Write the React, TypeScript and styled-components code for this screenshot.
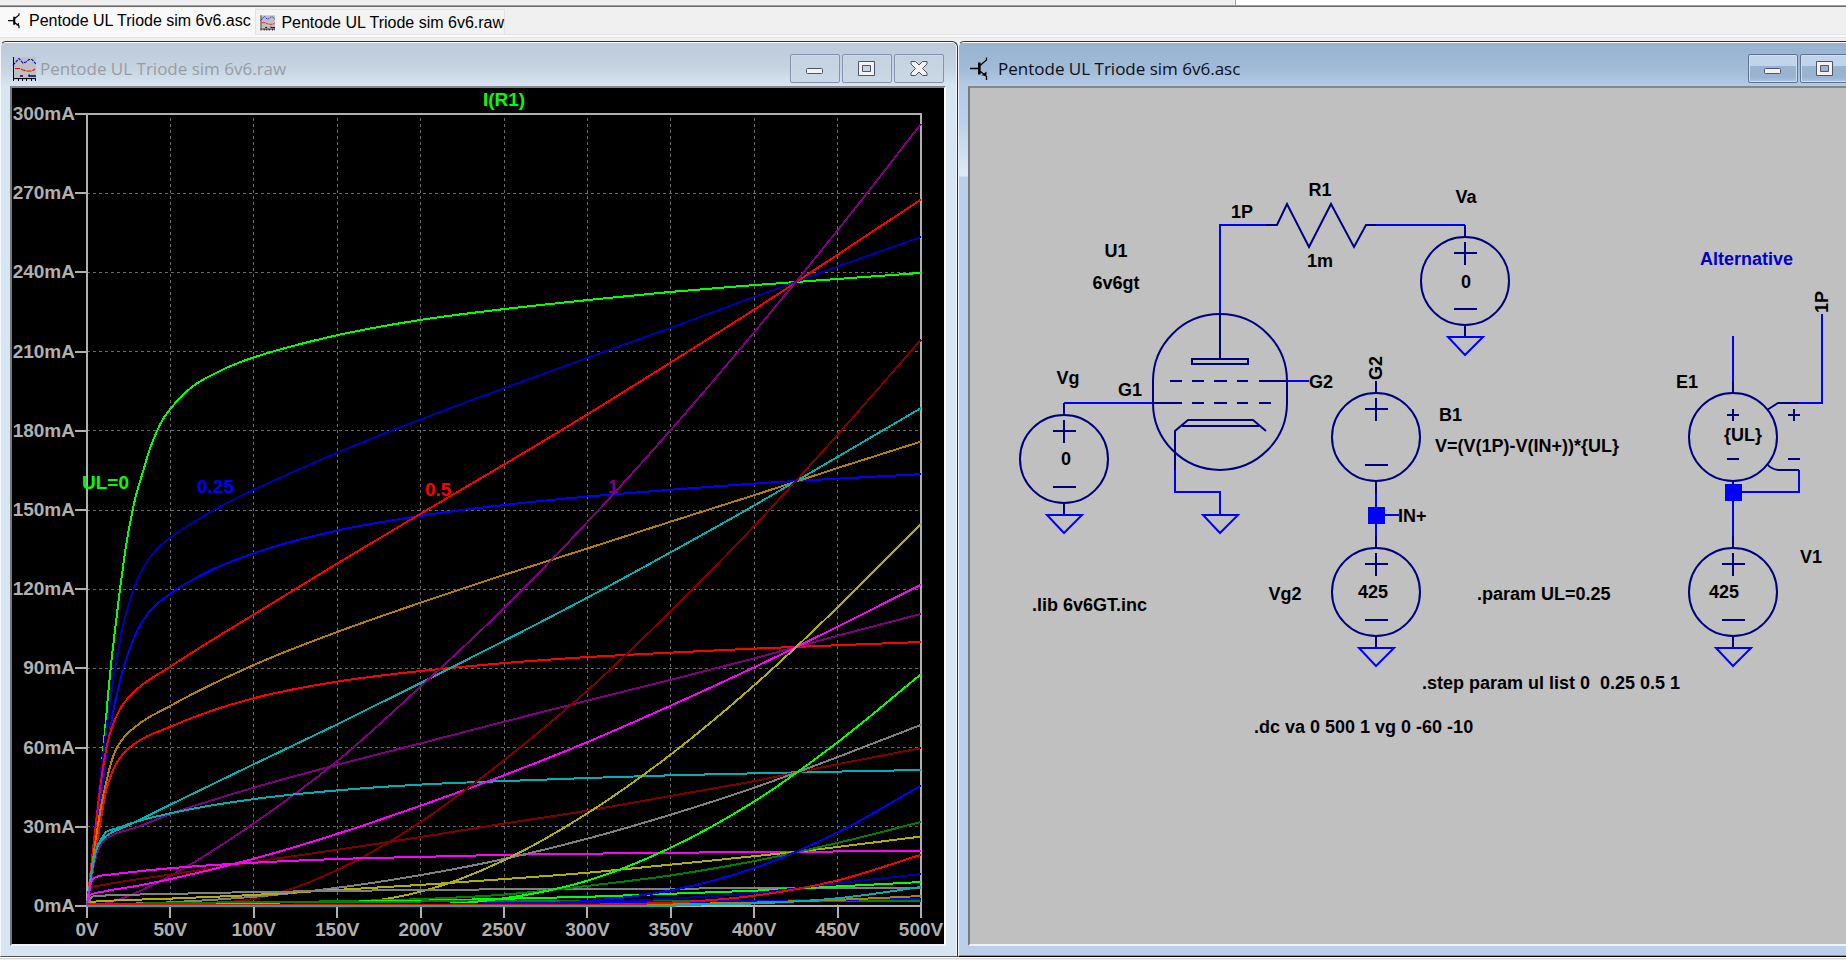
import React from "react";
import styled, { createGlobalStyle, css } from "styled-components";

const GlobalStyle = createGlobalStyle`
  *, *::before, *::after { box-sizing: border-box; }
  body {
    margin: 0;
    background: #ffffff;
    font-family: "Liberation Sans", Arial, sans-serif;
    overflow-x: hidden;
  }
`;

/* ---------- application frame ---------- */

const Page = styled.div`
  display: flex;
  flex-direction: column;
  min-height: 100vh;
  background: #f0f0f0;
`;

const ToolStrip = styled.div`
  display: grid;
  grid-template-columns: 1235fr 611fr;
  height: 7px;
  border-bottom: 1px solid #696969;
  box-shadow: inset 0 -1px 0 #a0a0a0;
`;

const ToolStripRest = styled.div`
  height: 5px;
  background: #ffffff;
  border-left: 1px solid #a0a0a0;
`;

const TabBar = styled.div`
  display: flex;
  align-items: flex-start;
  height: 31px;
  padding-top: 1px;
  background: linear-gradient(#f0f0f0 27px, #e3e3e3 27px, #e3e3e3 28px, #fbfbfb 28px, #fbfbfb 30px, #e3e3e3 30px);
`;

const Tab = styled.button<{ $active?: boolean }>`
  display: flex;
  align-items: center;
  font: 16px/20px "Liberation Sans", Arial, sans-serif;
  color: #000000;
  white-space: nowrap;
  border: 0;
  ${(p) =>
    p.$active
      ? css`
          width: 255px;
          height: 29px;
          padding: 0 0 4px 6px;
          gap: 7px;
          background: #f9f9f9;
        `
      : css`
          width: 250px;
          height: 26px;
          margin-top: 1px;
          padding: 2px 0 0 4px;
          gap: 6px;
          background: #f3f3f3;
          border: 1px solid #e3e3e3;
        `}
`;

const Workspace = styled.main`
  display: grid;
  grid-template-columns: minmax(0, 958fr) minmax(0, 888fr);
  align-items: start;
  padding-top: 3px;
  background: #f0f0f0;
  border-bottom: 1px solid #ffffff;
`;

const Footer = styled.div`
  flex: 1;
  border-top: 1px solid #d4d4d4;
  background: #f0f0f0;
`;

/* ---------- child windows ---------- */

const WindowFrame = styled.section<{ $active?: boolean }>`
  display: flex;
  flex-direction: column;
  border-top: 1px solid #2b2f36;
  border-radius: 6px 6px 0 0;
  overflow: hidden;
  ${(p) =>
    p.$active
      ? css`
          padding: 0 0 10px 9px;
          border-left: 1px solid #eef4fb;
          border-bottom: 1px solid #000000;
          border-top-right-radius: 0;
          background: linear-gradient(
            #ffffff 1px, #98b3d1 1px, #a0bad7 26px, #b4cbe6 44px, #b9d1ea 80px,
            #dfe9f5 134px, #bad0ea 135px
          );
          box-shadow: inset 0 -1px 0 #35b5d3;
        `
      : css`
          padding: 0 11px 10px 9px;
          border-left: 1px solid #f3f7fb;
          border-right: 1px solid #2b2f36;
          border-bottom: 1px solid #4b4f55;
          background: linear-gradient(#ffffff 1px, #bccad9 1px, #c6d3e1 26px, #d7e4f2 44px);
          box-shadow: inset -1px 0 0 #f3f7fb;
        `}
`;

const TitleBar = styled.header<{ $active?: boolean }>`
  display: flex;
  align-items: center;
  height: 44px;
  padding: 9px 2px 0 2px;
  overflow: hidden;
  color: ${(p) => (p.$active ? "#0b0f18" : "#989da4")};
`;

const Title = styled.h2<{ $gap: number }>`
  flex: 1;
  min-width: 0;
  margin: 0;
  padding-left: ${(p) => p.$gap}px;
  font: 400 17px/24px "Open Sans", "Noto Sans", sans-serif;
  white-space: nowrap;
  overflow: hidden;
`;

const Controls = styled.div<{ $cut?: boolean }>`
  display: flex;
  gap: 2px;
  flex: none;
  margin-right: ${(p) => (p.$cut ? "-6px" : "0")};
`;

const ControlButton = styled.button<{ $active?: boolean }>`
  display: flex;
  align-items: center;
  justify-content: center;
  width: 50px;
  height: 29px;
  padding: 0;
  border-radius: 2px;
  ${(p) =>
    p.$active
      ? css`
          border: 1px solid #5f7391;
          background: linear-gradient(#c0d5ea 0 11px, #99b3d0 11px 22px, #adc6e2);
          box-shadow: inset 0 0 0 1px #cfe0f2;
        `
      : css`
          border: 1px solid #8492b0;
          background: linear-gradient(#c4d1df, #cbd8e6);
          box-shadow: inset 0 0 0 1px #cdd9e7;
        `}
`;

const Client = styled.div<{ $dark?: boolean; $bleed?: boolean }>`
  border: 2px solid;
  border-color: #84878a #ffffff #f2f2f2 #77797c;
  border-right-width: ${(p) => (p.$bleed ? 0 : 2)}px;
  background: ${(p) => (p.$dark ? "#000000" : "#c0c0c0")};
`;

const Canvas = styled.svg`
  display: block;
  width: 100%;
  height: auto;
  font-family: "Liberation Sans", Arial, sans-serif;
  font-weight: 700;
`;

const PlotText = styled.text`
  font-size: 19px;
`;

const NoteText = styled.text`
  font-size: 18px;
  white-space: pre;
`;

/* ---------- icons ---------- */

const TransistorIcon = ({ width, height }: { width: number; height: number }) => (
  <svg width={width} height={height} viewBox="0 0 18 24" aria-hidden="true"
    fill="none" stroke="#000" strokeWidth={height > 20 ? 1.3 : 1.8}>
    <path d="M0 11.5H9M10 5.5V17.5M8.7 5.5V17.5M10 8.5L16.5 3V0.5M10 14L16.5 19.5V23" />
    <path d="M11.5 18.5H16.5V14.5Z" fill="#000" stroke="none" />
  </svg>
);

const WaveIcon = ({ size }: { size: number }) => (
  <svg width={size} height={size} viewBox="0 0 24 24" aria-hidden="true" fill="none">
    <rect x="1" width="23" height="23" fill="#c0c0c0" />
    <path d="M1 8L3 6L7 1.5L11 6L14 5L17 2.5H20L24 7" stroke="#0000ff" strokeWidth="1.1" strokeDasharray="3 1" />
    <path d="M3 11.5H8L11 13L15 14H20L23 12" stroke="#ff0000" strokeWidth="1.2" strokeDasharray="5 1" />
    <path d="M8 19H11M17 17.5V19H24" stroke="#000080" strokeWidth="1.4" />
    <path d="M1.5 0V24M1 21.5H24M6.5 21V24M10.5 21V24M14.5 21V24M19.5 21V24M23.5 21V24" stroke="#000" strokeWidth="1" />
  </svg>
);

const glyph = { fill: "#f3f3f3", stroke: "#4d5468" };

const MinimizeGlyph = () => (
  <svg width="18" height="16" viewBox="0 0 18 16" aria-hidden="true" {...glyph}>
    <rect x="0.5" y="7.5" width="16" height="5" rx="1" />
  </svg>
);

const MaximizeGlyph = () => (
  <svg width="18" height="16" viewBox="0 0 18 16" aria-hidden="true" {...glyph}>
    <path fillRule="evenodd" d="M0.5 0.5H16.5V14.5H0.5ZM4.5 4.5V10.5H12.5V4.5Z" />
  </svg>
);

const CloseGlyph = () => (
  <svg width="18" height="16" viewBox="0 0 18 16" aria-hidden="true" {...glyph} strokeLinejoin="round">
    <path d="M1 0.5H5.5L9 4L12.5 0.5H17V3L12.5 7.5L17 12V14.5H12.5L9 11L5.5 14.5H1V12L5.5 7.5L1 3Z" />
  </svg>
);

/* ---------- plot ---------- */

type Point = [number, number];
type Trace = { color: string; points: Point[] };

const LIME = "#00ff00";
const BLUE = "#0000ff";
const RED = "#ff0000";
const TEAL = "#00b0b0";
const MAGENTA = "#ff00ff";
const GREY = "#808080";
const GREEN = "#008000";
const NAVY = "#0000b0";
const GOLD = "#b08000";
const PURPLE = "#800080";
const MAROON = "#800000";
const OLIVE = "#b0b000";

/* Points are [anode volts, milliamps]. */
const traces: Trace[] = [
  { color: LIME, points: [[0, 0], [9.4, 57], [11.8, 74], [14, 89], [16.8, 104.5], [19.8, 120], [22.8, 134], [28.8, 154], [33.8, 165], [37.8, 173.4], [41.8, 179.7], [45.8, 184.7], [50, 188.3], [56.8, 193.2], [63.7, 197], [75.7, 201.4], [91.7, 206], [100, 207.8], [150, 216.2], [200, 222], [250, 226.1], [300, 229.5], [350, 232.6], [400, 235.2], [500, 239.8]] },
  { color: NAVY, points: [[0, 0], [9.8, 58], [12.8, 73], [16.8, 90], [19.4, 99.5], [22.2, 107.8], [25.8, 115.6], [29.8, 122.9], [34.8, 129.2], [40.8, 134.4], [50, 139.5], [66.5, 146.4], [88.7, 154.2], [100, 157.6], [150, 171.7], [200, 184.3], [250, 196.1], [300, 207.6], [350, 219], [400, 230.7], [450, 242.2], [500, 253.4]] },
  { color: BLUE, points: [[0, 0], [9.8, 49], [12.8, 63], [15.8, 74], [18.8, 82.5], [21.4, 89.2], [25.4, 97], [29.8, 103.9], [35.8, 110.2], [42.8, 114.8], [50, 118.3], [75, 127.4], [100, 133.6], [150, 142.2], [200, 147.8], [250, 151.9], [300, 155.1], [350, 157.7], [400, 160], [500, 163.6]] },
  { color: RED, points: [[0, 0], [5.8, 33.8], [8.8, 49], [11.4, 59], [13.8, 65.4], [16.8, 70.8], [19.8, 74.6], [23.8, 78.2], [29.8, 82], [50, 90.7], [100, 110.4], [150, 129.7], [200, 148.6], [250, 167.2], [300, 186.2], [350, 205.9], [400, 225.9], [450, 246.7], [500, 267.6]] },
  { color: GOLD, points: [[0, 0], [5.8, 27.5], [8.8, 38.9], [11.4, 46.5], [13.8, 52.8], [16.8, 58.5], [21.8, 63.6], [29.8, 68.3], [50, 75.8], [100, 91.3], [150, 103.8], [200, 114.9], [250, 125.4], [300, 135.4], [350, 145.6], [400, 155.6], [450, 165.9], [500, 175.9]] },
  { color: RED, points: [[0, 0], [5.8, 23], [8.8, 34.5], [11.4, 43.5], [14.4, 49.6], [17.8, 54.2], [23.8, 59], [29.8, 62], [50, 67.9], [75, 74], [100, 78.7], [150, 85], [200, 89], [250, 92], [300, 94.3], [350, 96], [400, 97.5], [500, 100]] },
  { color: TEAL, points: [[0, 0], [1.8, 8.6], [4.8, 18.7], [7.8, 23.6], [11.8, 26.6], [20, 29.2], [30, 32.2], [50, 38.4], [100, 53.7], [150, 68.8], [200, 84.5], [250, 100.4], [300, 116.8], [350, 134], [400, 151.7], [450, 170.1], [500, 188.6]] },
  { color: PURPLE, points: [[0, 0], [10, 0.8], [18, 2.2], [30, 5.2], [50, 11.4], [100, 31.3], [150, 54.9], [200, 83.1], [250, 112.8], [300, 145.4], [350, 180.3], [400, 217.3], [425, 236.4], [450, 255.9], [500, 296.2]] },
  { color: PURPLE, points: [[0, 0], [2.2, 8.6], [4.8, 17.4], [7.8, 22.5], [11.8, 25.6], [29.8, 29.8], [50, 34.8], [100, 44.8], [150, 53.5], [200, 61.6], [250, 69.8], [300, 77.8], [350, 85.7], [400, 93.8], [450, 102.4], [500, 110.6]] },
  { color: TEAL, points: [[0, 0], [1.8, 8.6], [3.8, 16], [5.8, 21.8], [8.8, 25.6], [11.8, 28.2], [16.8, 29.2], [27.8, 31.6], [50, 35.1], [100, 40.5], [150, 43.8], [200, 46], [250, 47.3], [300, 48.5], [350, 49.5], [425, 50.6], [500, 51.5]] },
  { color: MAROON, points: [[0, 0], [2.2, 7], [10, 8], [50, 11.9], [100, 16.7], [150, 21.3], [200, 26.1], [250, 31.2], [300, 36.1], [350, 41.7], [400, 47.3], [450, 53.7], [500, 59.8]] },
  { color: MAGENTA, points: [[0, 0], [1.8, 4.2], [10, 5.5], [30, 7.6], [50, 10.2], [100, 17.9], [150, 27.3], [200, 38], [250, 49.5], [300, 62.1], [350, 75.9], [400, 90.4], [450, 105.8], [500, 121.7]] },
  { color: MAROON, points: [[0, 0.2], [60, 0.5], [75, 1], [100, 2.7], [120, 6], [150, 13.6], [200, 31.8], [250, 55.2], [300, 81.6], [350, 111.7], [400, 143.9], [450, 178.5], [500, 214.5]] },
  { color: MAGENTA, points: [[0, 0], [2.8, 9.4], [5.8, 11.1], [16.8, 12.1], [50, 14.3], [100, 16.4], [150, 17.8], [200, 18.6], [250, 19.4], [350, 20.2], [425, 20.5], [500, 21]] },
  { color: GREY, points: [[0, 0.4], [10, 0.6], [50, 1.4], [100, 3.5], [150, 6.9], [200, 11.7], [250, 17.8], [300, 25.5], [350, 34.6], [400, 44.8], [450, 56.4], [500, 68.6]] },
  { color: OLIVE, points: [[0, 0], [3, 1.6], [50, 2.8], [100, 4.2], [150, 6.1], [200, 8], [250, 10.2], [300, 12.6], [350, 15.7], [425, 20.5], [500, 26.3]] },
  { color: OLIVE, points: [[0, 0.2], [130, 0.2], [150, 0.6], [170, 1.8], [200, 5.4], [223.6, 10.2], [250, 17.3], [300, 35.1], [350, 57.4], [400, 83.6], [450, 113.1], [500, 144.7]] },
  { color: GREY, points: [[0, 0], [3, 3.4], [5, 3.8], [50, 4.6], [100, 5.3], [200, 6.1], [300, 6.5], [500, 6.8]] },
  { color: GREEN, points: [[0, 0.4], [100, 1.3], [150, 1.8], [200, 2.6], [250, 4.3], [300, 7.6], [350, 11.6], [400, 17], [450, 23.9], [500, 31.8]] },
  { color: LIME, points: [[0, 0.4], [100, 1.2], [200, 2], [300, 3.5], [400, 5.8], [500, 9.1]] },
  { color: GREEN, points: [[0, 0.6], [100, 1.5], [200, 1.7], [500, 2]] },
  { color: LIME, points: [[0, 0.2], [180, 0.3], [223.6, 1.1], [250, 2.9], [270, 5], [300, 9.6], [350, 22.1], [400, 39.6], [450, 62], [500, 87.8]] },
  { color: BLUE, points: [[0, 0.2], [200, 0.8], [300, 1.2], [400, 1.9], [500, 2.8]] },
  { color: NAVY, points: [[0, 0.2], [250, 0.8], [300, 1.5], [350, 2.8], [400, 4.9], [450, 8.6], [500, 12.1]] },
  { color: BLUE, points: [[0, 0.2], [200, 0.3], [250, 0.7], [300, 1.9], [350, 5.9], [400, 14.3], [425, 20.5], [450, 27.8], [500, 45.6]] },
  { color: GOLD, points: [[0, 0.2], [300, 0.5], [400, 1.3], [450, 2.3], [500, 3.8]] },
  { color: RED, points: [[0, 0.2], [250, 0.3], [300, 0.5], [350, 1.3], [400, 3.9], [450, 9.7], [500, 19.4]] },
  { color: TEAL, points: [[0, 0], [345, 0], [360, 0.4], [400, 1], [450, 2.9], [500, 7.2]] },
];

const PLOT = { left: 87, right: 921, top: 114, bottom: 906 };
const xOf = (v: number) => PLOT.left + (v * (PLOT.right - PLOT.left)) / 500;
const yOf = (ma: number) => PLOT.bottom - (ma * (PLOT.bottom - PLOT.top)) / 300;

/* Monotone cubic through the samples, so that no trace overshoots. */
function tracePath(points: Point[]): string {
  const p = points.map(([v, i]) => [xOf(v), yOf(i)] as Point);
  const n = p.length;
  const slope = (k: number) => (p[k + 1][1] - p[k][1]) / (p[k + 1][0] - p[k][0]);
  const tangent = (k: number) => {
    if (k === 0) return slope(0);
    if (k === n - 1) return slope(n - 2);
    const a = slope(k - 1);
    const b = slope(k);
    if (a * b <= 0) return 0;
    const ha = p[k][0] - p[k - 1][0];
    const hb = p[k + 1][0] - p[k][0];
    const mid = (a * hb + b * ha) / (ha + hb);
    return Math.sign(mid) * Math.min(Math.abs(mid), 2 * Math.abs(a), 2 * Math.abs(b));
  };
  let d = `M${p[0][0]} ${p[0][1]}`;
  for (let k = 0; k < n - 1; k++) {
    const h = (p[k + 1][0] - p[k][0]) / 3;
    d += `C${(p[k][0] + h).toFixed(1)} ${(p[k][1] + h * tangent(k)).toFixed(1)} ${(p[k + 1][0] - h).toFixed(1)} ${(p[k + 1][1] - h * tangent(k + 1)).toFixed(1)} ${p[k + 1][0].toFixed(1)} ${p[k + 1][1].toFixed(1)}`;
  }
  return d;
}

const steps = Array.from({ length: 11 }, (_, k) => k);

const Plot = () => (
  <Canvas viewBox="12 88 932 856" role="img" aria-label="I(R1) against anode voltage">
    <g stroke="#6a6a6a" strokeDasharray="3 3" shapeRendering="crispEdges">
      {steps.slice(1, 10).map((k) => (
        <React.Fragment key={k}>
          <line x1={Math.floor(xOf(k * 50)) + 0.5} x2={Math.floor(xOf(k * 50)) + 0.5} y1={118} y2={PLOT.bottom} />
          <line x1={PLOT.left} x2={PLOT.right} y1={Math.floor(yOf(k * 30)) + 0.5} y2={Math.floor(yOf(k * 30)) + 0.5} />
        </React.Fragment>
      ))}
    </g>
    <g stroke="#b0b0b0" strokeWidth={2} fill="none" shapeRendering="crispEdges">
      <rect x={PLOT.left} y={PLOT.top} width={PLOT.right - PLOT.left} height={PLOT.bottom - PLOT.top} />
      {steps.map((k) => (
        <React.Fragment key={k}>
          <line x1={75} x2={PLOT.left} y1={Math.round(yOf(k * 30))} y2={Math.round(yOf(k * 30))} />
          <line x1={Math.round(xOf(k * 50))} x2={Math.round(xOf(k * 50))} y1={PLOT.bottom} y2={918} />
        </React.Fragment>
      ))}
    </g>
    <g fill="none" strokeWidth={2} shapeRendering="crispEdges">
      {traces.map((t, k) => (
        <path key={k} d={tracePath(t.points)} stroke={t.color} />
      ))}
    </g>
    <g fill="#b0b0b0">
      {steps.map((k) => (
        <React.Fragment key={k}>
          <PlotText x={75} y={Math.round(yOf(k * 30)) + 6} textAnchor="end">{`${k * 30}mA`}</PlotText>
          <PlotText x={xOf(k * 50)} y={936} textAnchor="middle">{`${k * 50}V`}</PlotText>
        </React.Fragment>
      ))}
    </g>
    <PlotText x={504} y={106} fill={LIME} textAnchor="middle">I(R1)</PlotText>
    <PlotText x={82} y={489} fill={LIME}>UL=0</PlotText>
    <PlotText x={197} y={493} fill={BLUE}>0.25</PlotText>
    <PlotText x={425} y={496} fill={RED}>0.5</PlotText>
    <PlotText x={608} y={493} fill={PURPLE}>1</PlotText>
  </Canvas>
);

/* ---------- schematic ---------- */

const SYMBOL = "#000080";

const Ground = ({ x, y }: { x: number; y: number }) => (
  <path d={`M${x - 17} ${y}H${x + 18}L${x} ${y + 18}Z`} stroke={BLUE} />
);

const Source = ({ x, y, signs = true, ground = true }: { x: number; y: number; signs?: boolean; ground?: boolean }) => (
  <g stroke={SYMBOL}>
    <circle cx={x} cy={y} r={44} />
    <path d={`M${x} ${y - 56}V${y - 44}M${x} ${y + 44}V${y + 56}`} />
    {signs && <path d={`M${x - 11} ${y - 28}H${x + 12}M${x} ${y - 39}V${y - 16}M${x - 11} ${y + 28}H${x + 12}`} />}
    {ground && <Ground x={x} y={y + 56} />}
  </g>
);

type Note = { x: number; y: number; text: string; anchor?: "middle"; turned?: boolean; color?: string };

const notes: Note[] = [
  { x: 1320, y: 196, text: "R1", anchor: "middle" },
  { x: 1320, y: 267, text: "1m", anchor: "middle" },
  { x: 1242, y: 218, text: "1P", anchor: "middle" },
  { x: 1116, y: 257, text: "U1", anchor: "middle" },
  { x: 1116, y: 289, text: "6v6gt", anchor: "middle" },
  { x: 1068, y: 384, text: "Vg", anchor: "middle" },
  { x: 1130, y: 396, text: "G1", anchor: "middle" },
  { x: 1309, y: 388, text: "G2" },
  { x: 1066, y: 465, text: "0", anchor: "middle" },
  { x: 1398, y: 522, text: "IN+" },
  { x: 1382, y: 380, text: "G2", turned: true },
  { x: 1466, y: 203, text: "Va", anchor: "middle" },
  { x: 1466, y: 288, text: "0", anchor: "middle" },
  { x: 1700, y: 265, text: "Alternative", color: "#0000c8" },
  { x: 1828, y: 313, text: "1P", turned: true },
  { x: 1687, y: 388, text: "E1", anchor: "middle" },
  { x: 1439, y: 421, text: "B1" },
  { x: 1435, y: 452, text: "V=(V(1P)-V(IN+))*{UL}" },
  { x: 1743, y: 441, text: "{UL}", anchor: "middle" },
  { x: 1032, y: 611, text: ".lib 6v6GT.inc" },
  { x: 1285, y: 600, text: "Vg2", anchor: "middle" },
  { x: 1373, y: 598, text: "425", anchor: "middle" },
  { x: 1724, y: 598, text: "425", anchor: "middle" },
  { x: 1811, y: 563, text: "V1", anchor: "middle" },
  { x: 1477, y: 600, text: ".param UL=0.25" },
  { x: 1422, y: 689, text: ".step param ul list 0  0.25 0.5 1" },
  { x: 1254, y: 733, text: ".dc va 0 500 1 vg 0 -60 -10" },
];

const Schematic = () => (
  <Canvas viewBox="970 88 876 856" role="img" aria-label="Schematic of the 6v6 test circuit">
    <g fill="none" strokeWidth={2}>
      <g stroke={BLUE}>
        <path d="M1220 314V225H1266M1376 225H1465" />
        <path d="M1064 403H1153M1287 381H1309" />
        <path d="M1175 470V492H1220V515" />
        <path d="M1376 492V538M1376 515H1399" />
        <path d="M1733 336V382M1799 403H1822V314M1799 470V492H1733V538" />
      </g>
      <g stroke={SYMBOL}>
        <path d="M1266 225H1277L1287 204L1309 247L1331 204L1354 247L1366 225H1376" />
        <path d="M1153 381A67 67 0 0 1 1287 381V403A67 67 0 0 1 1153 403Z" />
        <path d="M1220 314V359M1192 359H1248V364H1192Z" />
        <path d="M1170 381H1182M1192 381H1204M1214 381H1227M1237 381H1248M1259 381H1287" />
        <path d="M1153 403H1182M1192 403H1204M1214 403H1227M1237 403H1248M1259 403H1271" />
        <path d="M1266 431L1253 420H1188L1175 431V470M1182 426H1259" />
        <path d="M1727 415H1739M1733 409V421M1727 459H1739M1788 415H1800M1794 409V421M1788 459H1800" />
        <path d="M1767 410L1778 403H1799M1767 464Q1771 469 1778 470H1799" />
      </g>
      <Source x={1465} y={281} />
      <Source x={1064} y={459} />
      <Source x={1376} y={437} ground={false} />
      <Source x={1376} y={592} />
      <Source x={1733} y={437} signs={false} ground={false} />
      <Source x={1733} y={592} />
      <Ground x={1220} y={515} />
    </g>
    <g fill={BLUE} shapeRendering="crispEdges">
      <rect x={1368} y={507} width={17} height={17} />
      <rect x={1725} y={484} width={17} height={17} />
    </g>
    {notes.map((n, k) => (
      <NoteText
        key={k}
        x={n.x}
        y={n.y}
        fill={n.color ?? "#000000"}
        textAnchor={n.anchor}
        transform={n.turned ? `rotate(-90 ${n.x} ${n.y})` : undefined}
      >
        {n.text}
      </NoteText>
    ))}
  </Canvas>
);

export default function App() {
  return (
    <Page>
      <GlobalStyle />
      <ToolStrip>
        <div />
        <ToolStripRest />
      </ToolStrip>
      <TabBar>
        <Tab type="button" $active>
          <TransistorIcon width={16} height={16} />
          Pentode UL Triode sim 6v6.asc
        </Tab>
        <Tab type="button">
          <WaveIcon size={16} />
          Pentode UL Triode sim 6v6.raw
        </Tab>
      </TabBar>
      <Workspace>
        <WindowFrame>
          <TitleBar>
            <WaveIcon size={24} />
            <Title $gap={4}>Pentode UL Triode sim 6v6.raw</Title>
            <Controls>
              <ControlButton type="button" aria-label="Minimize"><MinimizeGlyph /></ControlButton>
              <ControlButton type="button" aria-label="Maximize"><MaximizeGlyph /></ControlButton>
              <ControlButton type="button" aria-label="Close"><CloseGlyph /></ControlButton>
            </Controls>
          </TitleBar>
          <Client $dark>
            <Plot />
          </Client>
        </WindowFrame>
        <WindowFrame $active>
          <TitleBar $active>
            <TransistorIcon width={18} height={24} />
            <Title $gap={10}>Pentode UL Triode sim 6v6.asc</Title>
            <Controls $cut>
              <ControlButton type="button" $active aria-label="Minimize"><MinimizeGlyph /></ControlButton>
              <ControlButton type="button" $active aria-label="Maximize"><MaximizeGlyph /></ControlButton>
            </Controls>
          </TitleBar>
          <Client $bleed>
            <Schematic />
          </Client>
        </WindowFrame>
      </Workspace>
      <Footer />
    </Page>
  );
}
